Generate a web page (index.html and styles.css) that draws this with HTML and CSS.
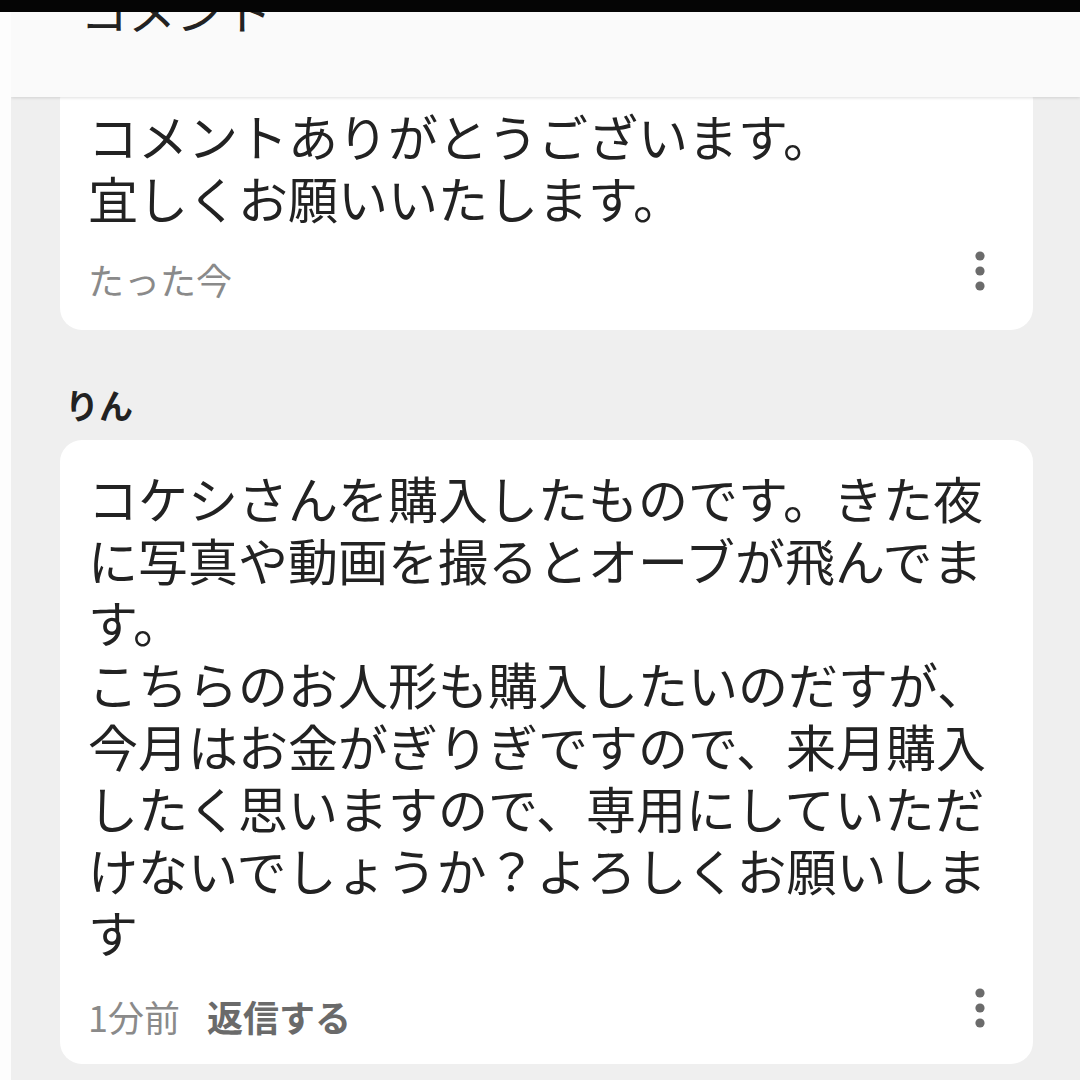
FILE: index.html
```html
<!DOCTYPE html>
<html lang="ja">
<head>
<meta charset="utf-8">
<link rel="stylesheet" href="styles.css">
</head>
<body>
<div class="topbar"></div>
<div class="screen">
  <div class="edge"></div>
  <div class="app">
    <header class="header"><h1 class="title">コメント</h1></header>
    <main class="list">
      <article class="card card-first">
        <p class="body">コメントありがとうございます。<br>宜しくお願いいたします。</p>
        <div class="footer">
          <span class="time">たった今</span>
          <svg class="more" width="20" height="40" viewBox="0 0 20 40"><circle cx="10" cy="5" r="4.6"/><circle cx="10" cy="20" r="4.6"/><circle cx="10" cy="35" r="4.6"/></svg>
        </div>
      </article>
      <div class="name">りん</div>
      <article class="card">
        <p class="body">コケシさんを購入したものです。きた夜に写真や動画を撮るとオーブが飛んでます。<br>こちらのお人形も購入したいのだすが、<br>今月はお金がぎりぎですので、来月購入したく思いますので、専用にしていただけないでしょうか？よろしくお願いします</p>
        <div class="footer">
          <span class="time">1分前</span>
          <span class="reply">返信する</span>
          <svg class="more" width="20" height="40" viewBox="0 0 20 40"><circle cx="10" cy="5" r="4.6"/><circle cx="10" cy="20" r="4.6"/><circle cx="10" cy="35" r="4.6"/></svg>
        </div>
      </article>
    </main>
  </div>
</div>
</body>
</html>
```

FILE: styles.css
```css
* { box-sizing: border-box; }
html, body { margin: 0; padding: 0; }
body {
  width: 1080px;
  height: 1080px;
  overflow: hidden;
  background: #fdfdfd;
  font-family: "Noto Sans CJK JP", "Noto Sans", sans-serif;
  color: #222;
}
.topbar {
  height: 12px;
  background: #050505;
  position: relative;
  z-index: 3;
}
.screen {
  display: flex;
  height: 1068px;
}
.edge {
  width: 11px;
  flex: none;
  background: #fdfdfd;
}
.app {
  flex: 1;
  background: #efefef;
  overflow: hidden;
}
.header {
  height: 85px;
  background: #fafafa;
  position: relative;
  z-index: 2;
  box-shadow: 0 1px 3px rgba(0,0,0,0.13);
  overflow: hidden;
}
.title {
  margin: -27px 0 0 69px;
  font-size: 48px;
  line-height: 48px;
  font-weight: 400;
  color: #222;
}
.list {
  margin-top: -19px;
  padding: 0 47px 0 49px;
}
.card {
  background: #fff;
  border-radius: 22px;
  padding: 26px 25px 26px 28px;
}
.body {
  margin: 0;
  font-size: 50px;
  line-height: 62px;
  color: #222;
}
.footer {
  display: flex;
  align-items: flex-start;
  height: 44px;
  margin-top: 32px;
}
.card-first .footer {
  margin-top: 29px;
}
.card-first {
  padding-bottom: 29px;
}
.time {
  font-size: 36px;
  line-height: 44px;
  color: #8a8a8a;
}
.reply {
  margin-left: 27px;
  font-size: 36px;
  line-height: 44px;
  font-weight: 700;
  color: #6a6a6a;
}
.more {
  margin-left: auto;
  margin-right: 18px;
  margin-top: -6px;
  fill: #6b6b6b;
}
.name {
  margin: 53px 0 13px 5px;
  font-size: 34px;
  line-height: 44px;
  font-weight: 700;
  color: #222;
}
```
